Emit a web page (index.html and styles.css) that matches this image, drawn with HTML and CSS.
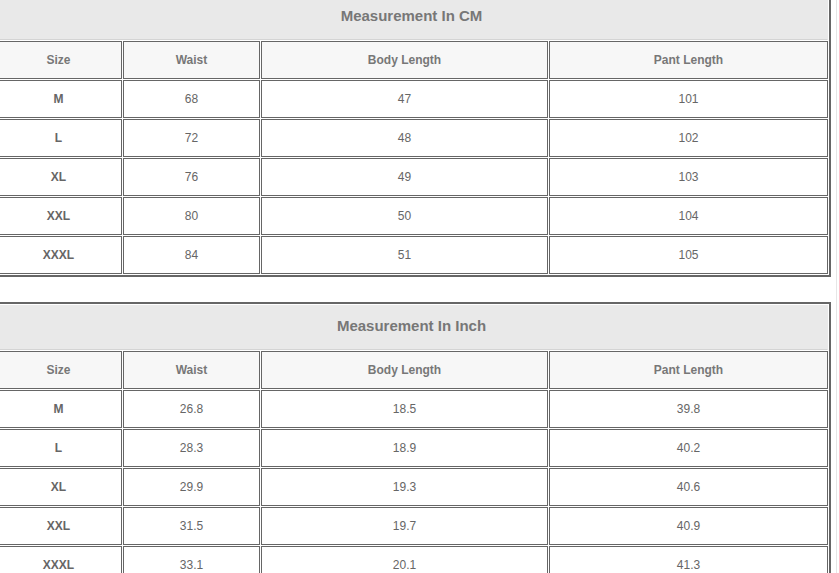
FILE: index.html
```html
<!DOCTYPE html>
<html>
<head>
<meta charset="utf-8">
<link rel="stylesheet" href="styles.css">
</head>
<body>
<div class="page">
  <table class="chart">
    <colgroup><col class="c1"><col class="c2"><col class="c3"><col class="c4"></colgroup>
    <tr><td class="title" colspan="4">Measurement In CM</td></tr>
    <tr class="head"><td>Size</td><td>Waist</td><td>Body Length</td><td>Pant Length</td></tr>
    <tr><td class="sz">M</td><td>68</td><td>47</td><td>101</td></tr>
    <tr><td class="sz">L</td><td>72</td><td>48</td><td>102</td></tr>
    <tr><td class="sz">XL</td><td>76</td><td>49</td><td>103</td></tr>
    <tr><td class="sz">XXL</td><td>80</td><td>50</td><td>104</td></tr>
    <tr><td class="sz">XXXL</td><td>84</td><td>51</td><td>105</td></tr>
  </table>
  <table class="chart">
    <colgroup><col class="c1"><col class="c2"><col class="c3"><col class="c4"></colgroup>
    <tr><td class="title" colspan="4">Measurement In Inch</td></tr>
    <tr class="head"><td>Size</td><td>Waist</td><td>Body Length</td><td>Pant Length</td></tr>
    <tr><td class="sz">M</td><td>26.8</td><td>18.5</td><td>39.8</td></tr>
    <tr><td class="sz">L</td><td>28.3</td><td>18.9</td><td>40.2</td></tr>
    <tr><td class="sz">XL</td><td>29.9</td><td>19.3</td><td>40.6</td></tr>
    <tr><td class="sz">XXL</td><td>31.5</td><td>19.7</td><td>40.9</td></tr>
    <tr><td class="sz">XXXL</td><td>33.1</td><td>20.1</td><td>41.3</td></tr>
  </table>
</div>
</body>
</html>
```
FILE: styles.css
```css
html, body {
  margin: 0;
  padding: 0;
  background: #fff;
  overflow: hidden;
}
.page {
  margin: -8px 0 0 -8px;
  width: 844px;
  min-height: 600px;
  border-right: 1px solid #e6e6e6;
  font-family: "Liberation Sans", Arial, sans-serif;
}
.chart {
  width: 838px;
  table-layout: fixed;
  border: 2px solid #666;
  border-spacing: 1px;
  margin-bottom: 25px;
}
.c1 { width: 127px; }
.c2 { width: 137px; }
.c3 { width: 287px; }
.c4 { width: 279px; }
.chart td {
  border: 1px solid #666;
  height: 36px;
  padding: 0;
  text-align: center;
  vertical-align: middle;
  font-size: 12px;
  color: #666;
  background: #fff;
}
.chart td.title {
  height: 39px;
  padding-bottom: 4px;
  background: #e9e9e9;
  border: 1px solid #e9e9e9;
  border-bottom-color: #d4d4d4;
  font-size: 15px;
  font-weight: bold;
  color: #777;
}
.chart .head td {
  background: #f7f7f7;
  font-weight: bold;
  color: #777;
}
.chart td.sz {
  font-weight: bold;
  color: #666;
}
```
